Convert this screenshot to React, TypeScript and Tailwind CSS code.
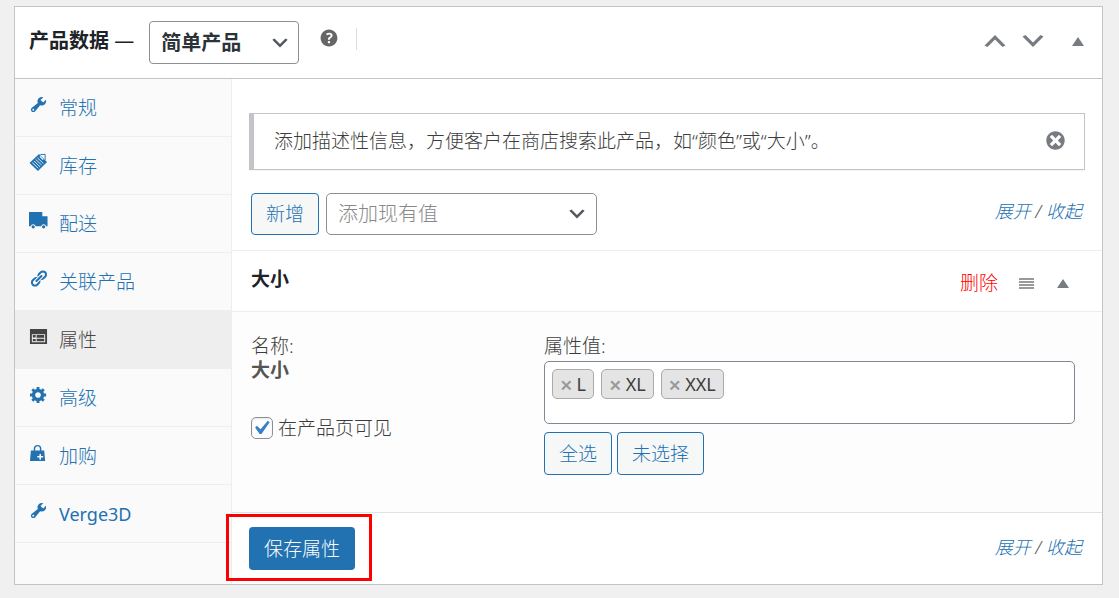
import { useState } from "react";
import type { ReactNode } from "react";
import { clsx } from "clsx";

const ICON_PATHS = {
  wrench:
    "M16.68 9.77c-1.34 1.34-3.3 1.67-4.95.99l-5.41 6.52c-.99.99-2.59.99-3.58 0s-.99-2.59 0-3.57l6.52-5.42c-.68-1.65-.35-3.61.99-4.95 1.28-1.28 3.12-1.62 4.72-1.06l-2.89 2.89 2.82 2.82 2.86-2.87c.53 1.58.18 3.39-1.08 4.65zM3.81 16.21c.4.39 1.04.39 1.43 0 .4-.4.4-1.04 0-1.43-.39-.4-1.03-.4-1.43 0-.39.39-.39 1.03 0 1.43z",
  link: "M17.74 2.76c1.68 1.69 1.68 4.41 0 6.1l-1.53 1.52c-1.12 1.12-2.7 1.47-4.14 1.09l2.62-2.61.76-.77.76-.76c.84-.84.84-2.2 0-3.04-.84-.85-2.2-.85-3.04 0l-.77.76-3.38 3.38c-.37-1.44-.02-3.02 1.1-4.14l1.52-1.53c1.69-1.68 4.42-1.68 6.1 0zM8.59 13.43l5.34-5.34c.42-.42.42-1.1 0-1.52-.44-.43-1.13-.39-1.53 0l-5.33 5.34c-.42.42-.42 1.1 0 1.52.44.43 1.13.39 1.52 0zm-.76 2.29l4.14-4.15c.38 1.44.03 3.02-1.09 4.14l-1.52 1.53c-1.69 1.68-4.41 1.68-6.1 0-1.68-1.68-1.68-4.42 0-6.1l1.53-1.52c1.12-1.12 2.7-1.47 4.14-1.1l-4.14 4.15c-.85.84-.85 2.2 0 3.05.84.84 2.2.84 3.04 0z",
  gear: "M18 12h-2.18c-.17.7-.44 1.35-.81 1.93l1.54 1.54-2.1 2.1-1.54-1.54c-.58.36-1.23.63-1.91.79V19H8v-2.18c-.68-.16-1.33-.43-1.91-.79l-1.54 1.54-2.12-2.12 1.54-1.54c-.36-.58-.63-1.23-.79-1.91H1V9.03h2.17c.16-.7.44-1.35.8-1.94L2.43 5.55l2.1-2.1 1.54 1.54c.58-.37 1.24-.64 1.93-.81V2h3v2.18c.68.16 1.33.43 1.91.79l1.54-1.54 2.12 2.12-1.54 1.54c.36.59.64 1.24.8 1.94H18V12zm-8.5 1.5c1.66 0 3-1.34 3-3s-1.34-3-3-3-3 1.34-3 3 1.34 3 3 3z",
  card: "M1 2h18v16H1zM3 7.500v8.500h14V7.500zM4 8.500h3v2.500H4zM4 12.500h3V15H4zM8 8.500H16v2.800H8zM8 12.300H16V15H8z",
  truck:
    "M0 1h14v4.500h5.500V16h-1.500a2.700 2.700 0 0 0-5.200 0H7a2.700 2.700 0 0 0-5.200 0H0zM4.400 15a1.700 1.700 0 1 1 0 3.400 1.700 1.700 0 0 1 0-3.400zM15.400 15a1.700 1.700 0 1 1 0 3.400 1.700 1.700 0 0 1 0-3.400z",
  bag: "M5 8V6a4 4 0 0 1 8 0V8H16l1 11H1L2 8zM6.500 8h5V6a2.500 2.500 0 0 0-5 0zM11 11.500v2.200H8.700v1.600H11v2.200h1.600v-2.200h2.300v-1.600h-2.300v-2.200z",
  help: "M17 10c0-3.87-3.14-7-7-7-3.87 0-7 3.13-7 7s3.13 7 7 7c3.86 0 7-3.13 7-7zm-6.3 1.48H9.14v-.43c0-.38.08-.7.24-.98s.46-.57.88-.89c.41-.29.68-.53.81-.71.14-.18.2-.39.2-.62 0-.25-.09-.44-.28-.58-.19-.13-.45-.19-.79-.19-.58 0-1.25.19-2 .57l-.64-1.28c.87-.49 1.8-.74 2.77-.74.81 0 1.45.2 1.92.58.48.39.71.91.71 1.55 0 .43-.09.8-.29 1.11-.19.32-.57.67-1.11 1.06-.38.28-.61.49-.71.63-.1.15-.15.34-.15.57v.35zm-1.47 2.74c-.18-.17-.27-.42-.27-.73 0-.33.08-.58.26-.75s.43-.25.77-.25c.32 0 .57.09.75.26s.27.42.27.74c0 .3-.09.55-.27.72-.18.18-.43.27-.75.27-.33 0-.58-.09-.76-.26z",
  dismiss:
    "M10 2c4.42 0 8 3.58 8 8s-3.58 8-8 8-8-3.58-8-8 3.58-8 8-8zm5 11l-3-3 3-3-2-2-3 3-3-3-2 2 3 3-3 3 2 2 3-3 3 3z",
  up: "M15 14l-5-5-5 5-2-1 7-7 7 7z",
  down: "M5 6l5 5 5-5 2 1-7 7-7-7z",
  check: "M14.83 4.89l1.34.94-5.81 8.38H9.02L5.78 9.67l1.34-1.25 2.57 2.4z",
  triangle: "M4 15l6-9 6 9z",
  menu: "M2 5h15v2H2zM2 8h15v2H2zM2 11h15v2H2zM2 14h15v2H2z",
};

type IconName = keyof typeof ICON_PATHS;

function Icon({ name, className }: { name: IconName; className?: string }) {
  return (
    <svg viewBox="0 0 20 20" fill="currentColor" fillRule="evenodd" aria-hidden="true" className={clsx("shrink-0", className)}>
      <path d={ICON_PATHS[name]} />
    </svg>
  );
}

function NoteIcon({ className }: { className?: string }) {
  return (
    <svg viewBox="0 0 20 20" aria-hidden="true" className={clsx("shrink-0", className)}>
      <path d="M10.500 1l8.500 8.500L9.500 19 .5 10.500z" fill="currentColor" />
      <path d="M3.500 10.200l6.300 6M5.300 8.500l6.300 6M7 6.700l6.300 6M8.800 5l6.300 6" stroke="#fff" strokeWidth="0.9" />
      <path d="M11.500 3.500l3.500 3.500" stroke="#fff" strokeWidth="1.2" />
      <path d="M12 1.500h5v6" fill="none" stroke="currentColor" strokeWidth="1" />
    </svg>
  );
}

const TABS: { id: string; label: string; icon: IconName | "note" }[] = [
  { id: "general", label: "常规", icon: "wrench" },
  { id: "inventory", label: "库存", icon: "note" },
  { id: "shipping", label: "配送", icon: "truck" },
  { id: "linked", label: "关联产品", icon: "link" },
  { id: "attributes", label: "属性", icon: "card" },
  { id: "advanced", label: "高级", icon: "gear" },
  { id: "cart", label: "加购", icon: "bag" },
  { id: "verge3d", label: "Verge3D", icon: "wrench" },
];

function OutlineButton({ children }: { children: ReactNode }) {
  return (
    <button type="button" className="rounded border border-[#2271b1] bg-[#f6f7f7] px-3.5 text-[#2271b1]">
      {children}
    </button>
  );
}

function ExpandLinks() {
  return (
    <span className="mr-[3px] text-lg leading-6 italic text-[#50575e]">
      <a href="#expand" className="text-[#2271b1]">展开</a>
      {" / "}
      <a href="#collapse" className="text-[#2271b1]">收起</a>
    </span>
  );
}

export default function App() {
  const [active, setActive] = useState("attributes");
  const [visible, setVisible] = useState(true);
  const [values, setValues] = useState(["L", "XL", "XXL"]);

  return (
    <div className="min-h-screen bg-[#f0f0f0] pt-1.5 pr-4 pb-3 pl-3.5 font-['Noto_Sans','Noto_Sans_CJK_SC',sans-serif] text-[19px] leading-6 font-light text-[#3c3c3c]">
      <section className="border border-[#c3c4c7] bg-white">
        <header className="flex h-[72px] items-center border-b border-[#c3c4c7] pr-3.5 pl-3.5">
          <h2 className="mb-1 text-xl font-bold text-[#1d2327]">
            <label htmlFor="product-type">
              产品数据 <span className="font-normal">—</span>
            </label>
          </h2>
          <div className="relative ml-[15px]">
            <select
              id="product-type"
              className="h-[43px] w-[150px] appearance-none rounded border border-[#8c8f94] bg-white pl-[11px] text-xl font-bold text-[#2c3338]"
            >
              <option>简单产品</option>
            </select>
            <Icon name="down" className="pointer-events-none absolute top-[11px] right-2 size-[22px] text-[#50575e]" />
          </div>
          <button type="button" aria-label="帮助" className="mb-2.5 ml-[18px] text-[#666]">
            <Icon name="help" className="size-6" />
          </button>
          <span className="mb-2 ml-[15px] h-[22px] w-px bg-[#dcdcde]" />
          <div className="mb-1 ml-auto flex items-center gap-2 text-[#787c82]">
            <button type="button" aria-label="上移"><Icon name="up" className="size-[30px]" /></button>
            <button type="button" aria-label="下移"><Icon name="down" className="size-[30px]" /></button>
            <button type="button" aria-label="收起面板" className="ml-3"><Icon name="triangle" className="size-5" /></button>
          </div>
        </header>

        <div className="flex">
          <nav className="w-[217px] shrink-0 border-r border-[#eee] bg-[#fafafa]">
            <ul>
              {TABS.map((tab) => (
                <li key={tab.id}>
                  <a
                    href={`#${tab.id}`}
                    onClick={() => setActive(tab.id)}
                    className={clsx(
                      "flex h-[58px] items-center gap-[11px] border-b border-[#eee] pl-3.5",
                      active === tab.id ? "bg-[#eee] text-[#444]" : "text-[#2271b1]",
                      tab.id === "verge3d" && "text-lg font-normal",
                    )}
                  >
                    {tab.icon === "note" ? (
                      <NoteIcon className="mb-1.5 size-[19px]" />
                    ) : (
                      <Icon name={tab.icon} className="mb-1.5 size-[19px]" />
                    )}
                    {tab.label}
                  </a>
                </li>
              ))}
            </ul>
          </nav>

          <div className="min-w-0 flex-1">
            <div className="border-b border-[#eee] px-[17px] pt-[34px] pb-[15px]">
              <div className="flex h-[57px] items-center justify-between border border-l-[5px] border-[#c3c4c7] pr-[17px] pb-0.5 pl-5 shadow-[0_1px_1px_rgba(0,0,0,0.04)]">
                <p>添加描述性信息，方便客户在商店搜索此产品，如“颜色”或“大小”。</p>
                <button type="button" aria-label="关闭" className="text-[#787c82]">
                  <Icon name="dismiss" className="size-[23px]" />
                </button>
              </div>
              <div className="mt-[23px] flex h-[42px] gap-[7px] pl-0.5">
                <OutlineButton>新增</OutlineButton>
                <div className="relative">
                  <select
                    aria-label="添加现有值"
                    className="h-full w-[271px] appearance-none rounded-[5px] border border-[#8c8f94] bg-white pl-[11px] text-xl text-[#888]"
                  >
                    <option>添加现有值</option>
                  </select>
                  <Icon name="down" className="pointer-events-none absolute top-2.5 right-[9px] size-[22px] text-[#50575e]" />
                </div>
                <div className="ml-auto pt-1.5">
                  <ExpandLinks />
                </div>
              </div>
            </div>

            <div className="flex h-[61px] items-center border-b border-[#eee] pr-[29px] pl-[19px]">
              <h3 className="mb-1 font-bold text-[#1d2327]">大小</h3>
              <div className="mt-1 ml-auto flex items-center">
                <a href="#remove" className="text-[#f00]">删除</a>
                <button type="button" aria-label="拖动排序" className="ml-[19px] text-[#999]"><Icon name="menu" className="size-5" /></button>
                <button type="button" aria-label="收起属性" className="ml-4 text-[#787c82]"><Icon name="triangle" className="size-5" /></button>
              </div>
            </div>

            <div className="flex border-b border-[#e2e2e2] bg-[#fdfdfd] pt-[22px] pr-[27px] pb-[37px] pl-[19px]">
              <div className="w-[293px] shrink-0">
                <p>名称:</p>
                <p className="font-bold text-[#555]">大小</p>
                <label className="mt-[34px] flex items-center gap-[5px]">
                  <span className="relative flex">
                    <input
                      type="checkbox"
                      checked={visible}
                      onChange={(e) => setVisible(e.target.checked)}
                      className="size-[22px] appearance-none rounded-[5px] border border-[#8c8f94] bg-white shadow-[inset_0_1px_2px_rgba(0,0,0,0.1)]"
                    />
                    {visible && <Icon name="check" className="pointer-events-none absolute -top-[3px] -left-1 size-7 text-[#3582c4]" />}
                  </span>
                  在产品页可见
                </label>
              </div>
              <div className="min-w-0 flex-1">
                <p>属性值:</p>
                <ul className="mt-[3px] flex h-[63px] items-start gap-[7px] rounded-[5px] border border-[#7e8993] bg-white p-[7px]">
                  {values.map((value) => (
                    <li key={value} className="flex h-[30px] items-center gap-1 rounded-[5px] border border-[#aaa] bg-[#e4e4e4] px-[7px] text-lg">
                      <button
                        type="button"
                        aria-label={`移除 ${value}`}
                        onClick={() => setValues((prev) => prev.filter((v) => v !== value))}
                        className="text-[22px] font-semibold text-[#999]"
                      >
                        ×
                      </button>
                      <span className="font-normal">{value}</span>
                    </li>
                  ))}
                </ul>
                <div className="mt-2 flex h-[43px] gap-[5px]">
                  <OutlineButton>全选</OutlineButton>
                  <OutlineButton>未选择</OutlineButton>
                </div>
              </div>
            </div>

            <div className="flex items-center justify-between px-[17px] py-3.5">
              <div className="relative">
                <button type="button" className="h-[43px] rounded bg-[#2271b1] px-[15px] text-white">
                  保存属性
                </button>
                <span className="pointer-events-none absolute -top-[13px] -right-[17px] -bottom-[11px] -left-[23px] border-3 border-[#f00]" />
              </div>
              <div className="pb-1">
                <ExpandLinks />
              </div>
            </div>
          </div>
        </div>
      </section>
    </div>
  );
}
